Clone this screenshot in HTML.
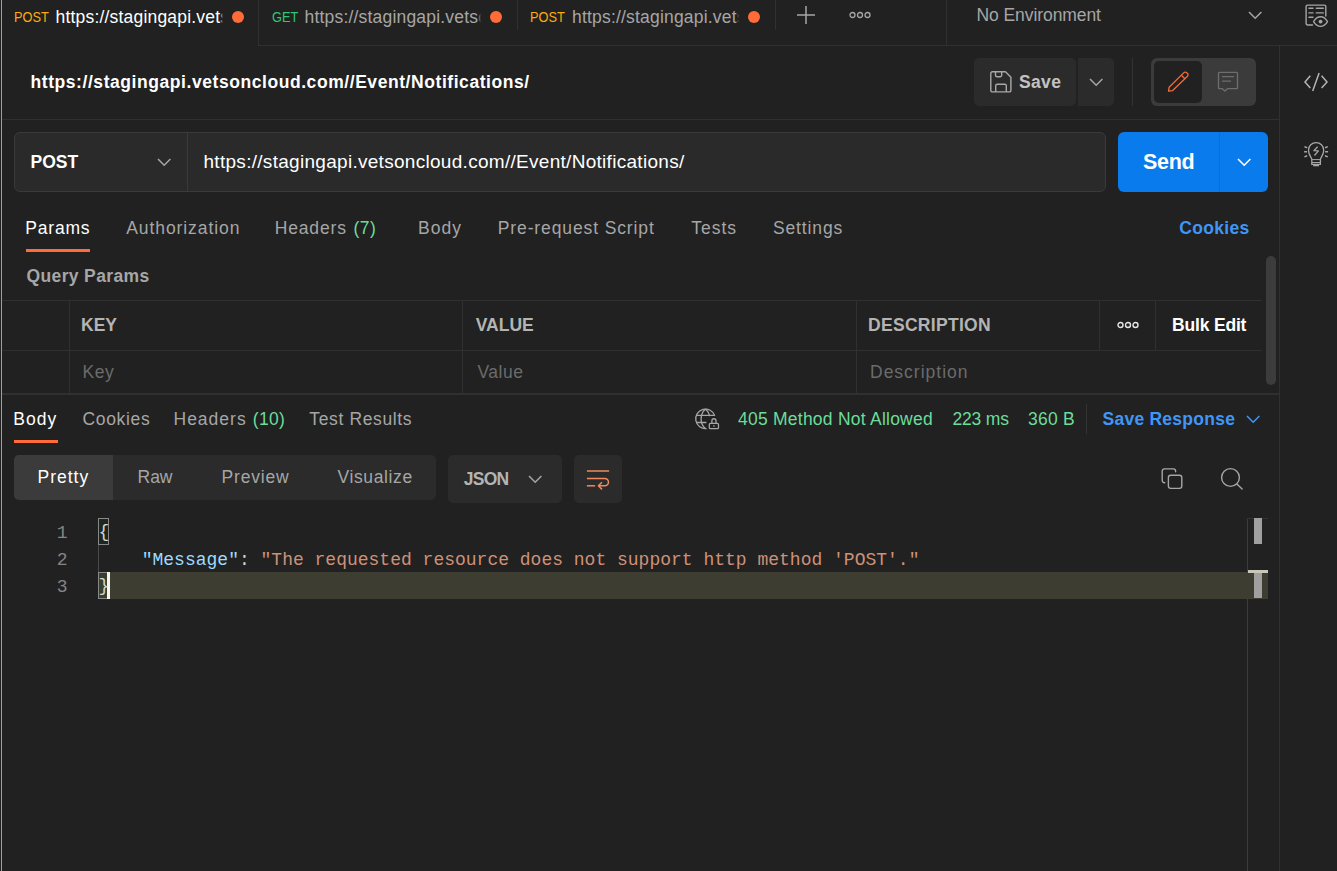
<!DOCTYPE html>
<html lang="en"><head><meta charset="utf-8"><title>Postman</title>
<style>
html,body{margin:0;padding:0;background:#212121;}
body{width:1337px;height:871px;overflow:hidden;font-family:"Liberation Sans",Arial,sans-serif;}
#app{position:relative;width:1337px;height:871px;background:#212121;overflow:hidden;}
#app div,#app span,#app svg{position:absolute;box-sizing:border-box;}
.t{white-space:pre;font-family:"Liberation Sans",Arial,sans-serif;font-weight:400;}
.t.b{font-weight:700;}
.hl{height:1px;background:#303030;}
.vl{width:1px;background:#303030;}
svg{overflow:visible;}
.tabtitle{overflow:hidden;}
.tt{left:0;top:8.5px;white-space:pre;font-size:17.5px;line-height:17.5px;letter-spacing:0.19px;}
.dot{width:12px;height:12px;border-radius:50%;background:#ff6c37;}
#code{left:0;top:0;width:1247px;height:871px;font-family:"Liberation Mono","DejaVu Sans Mono",monospace;font-size:18px;}
#code .ln{left:40px;width:27.500px;height:27px;line-height:27px;text-align:right;color:#858585;white-space:pre;}
#code .cl{left:98.500px;height:27px;line-height:27px;white-space:pre;color:#d4d4d4;}
#code .cl span{position:static;}
#code .k{color:#9cdcfe;}
#code .s{color:#ce9178;}
#code .p{color:#d4d4d4;}
.brk{border:1px solid #888;background:rgba(0,100,0,0.1);}
#code .cl span.br{position:relative;top:-1.500px;}
.fade{top:4px;width:3px;height:26px;background:linear-gradient(90deg,rgba(33,33,33,0),#212121);}
.mth{top:9px;font-size:15.500px;line-height:15.500px;white-space:pre;transform:scaleX(0.825);transform-origin:0 50%;}

</style></head>
<body>
<div id="app">
<!-- left window edge -->
<div id="edge" style="left:1px;top:0;width:1px;height:871px;background:#6ea8ee"></div>

<!-- ===== tab bar ===== -->
<div id="tabbar" style="left:0;top:0;width:1337px;height:46px">
  <div class="hl" style="left:259px;top:45px;width:1078px"></div>
  <div class="vl" style="left:258px;top:0;height:46px"></div>
  <div class="vl" style="left:517px;top:0;height:30px"></div>
  <div class="vl" style="left:775px;top:0;height:30px"></div>
  <div class="vl" style="left:946px;top:0;height:46px"></div>
  <span class="mth" style="left:14.400px;color:#fdaa0f">POST</span><span class="mth" style="left:272px;color:#2fc872">GET</span><span class="mth" style="left:530.400px;color:#fdaa0f">POST</span>
  <div class="tabtitle" style="left:55.5px;top:0;width:167.5px;height:40px;color:#fff"><span class="tt" id="tt1">https://stagingapi.vetsoncloud.com//Event/Notifications/</span></div>
  <div class="tabtitle" style="left:304.5px;top:0;width:176.5px;height:40px;color:#a6a6a6"><span class="tt" id="tt2">https://stagingapi.vetsoncloud.com//Event/Notifications/</span></div>
  <div class="tabtitle" style="left:572px;top:0;width:167px;height:40px;color:#a6a6a6"><span class="tt" id="tt3">https://stagingapi.vetsoncloud.com//Event/Notifications/</span></div>
  <div class="fade" style="left:220px"></div><div class="fade" style="left:478px"></div><div class="fade" style="left:736px"></div>
  <div class="dot" style="left:232px;top:11px"></div>
  <div class="dot" style="left:490px;top:11px"></div>
  <div class="dot" style="left:748px;top:11px"></div>
  <!-- plus -->
  <svg style="left:797px;top:6px" width="18" height="18" viewBox="0 0 18 18"><path d="M9 0v18M0 9h18" stroke="#a6a6a6" stroke-width="1.5" fill="none"/></svg>
  <!-- more -->
  <svg style="left:849px;top:11px" width="22" height="8" viewBox="0 0 22 8"><g fill="none" stroke="#a6a6a6" stroke-width="1.3"><circle cx="3.5" cy="4" r="2.5"/><circle cx="11" cy="4" r="2.5"/><circle cx="18.5" cy="4" r="2.5"/></g></svg>
  <!-- env chevron -->
<svg style="left:1248.13px;top:11.13px" width="14.400" height="9" viewBox="0 0 14.400 9"><path d="M1 1L7.200 7.200L13.400 1" stroke="#a6a6a6" stroke-width="1.5" fill="none"/></svg>
  <!-- env quick look -->
  <svg style="left:1305px;top:4px" width="24" height="24" viewBox="0 0 24 24"><g fill="none" stroke="#a6a6a6" stroke-width="1.4" stroke-linecap="round" stroke-linejoin="round"><path d="M7.5 21H2.6a1.5 1.5 0 0 1-1.5-1.5V2.6a1.5 1.5 0 0 1 1.5-1.5h16.7a1.5 1.5 0 0 1 1.5 1.5V12"/><path d="M4 4.300h4M11.300 4.300h7M4 8.900h4M11.300 8.900h7M4 13.200h4"/><path d="M8.6 17.6c1.900-3.200 4.200-4.800 6.950-4.800s5.050 1.600 6.950 4.800c-1.900 3.200-4.200 4.800-6.950 4.800s-5.050-1.600-6.950-4.800z"/><circle cx="15.550" cy="17.600" r="1.900" fill="#a6a6a6" stroke="none"/></g></svg>
</div>

<!-- ===== right sidebar ===== -->
<div class="vl" style="left:1279px;top:45px;height:826px"></div>
<svg style="left:1303px;top:72px" width="26" height="20" viewBox="0 0 26 20"><g fill="none" stroke="#b4b4b4" stroke-width="1.500" stroke-linejoin="miter"><path d="M7.300 3.800L2 10l5.300 5.900M18.600 3.800L24 10l-5.400 5.900M16.100 1L9.700 18.900"/></g></svg>
<svg style="left:1303px;top:141px" width="27" height="27" viewBox="0 0 27 27"><g fill="none" stroke="#a6a6a6" stroke-width="1.300" stroke-linecap="butt" stroke-linejoin="round"><path d="M8.800 23.400V18.300C8.800 16.500 5.500 14.500 5.500 9.200A7.600 7.600 0 0 1 20.700 9.200C20.700 14.500 17.400 16.500 17.400 18.300V23.400Z"/><path d="M8.800 18.600h8.600M8.800 21.500h8.600" stroke-width="1"/><path d="M10.200 24.400h5.800" stroke-width="1.800"/><path d="M14.600 5.700L10.900 9.700L15.400 9.900L11.500 14.500"/><path d="M4.200 6.700L1.400 5.600M4.100 10.800H1.100M4.200 14.800L1.400 15.900M22 6.700L24.800 5.600M22.100 10.800H25.100M22 14.800L24.800 15.900" stroke-width="1.500"/></g></svg>

<!-- ===== title row ===== -->
<div class="hl" style="left:2px;top:119px;width:1277px"></div>
<div id="savebtn" style="left:974px;top:58px;width:102px;height:48px;background:#2b2b2b;border-radius:5px"></div>
<div id="savedd" style="left:1078px;top:58px;width:36px;height:48px;background:#2b2b2b;border-radius:0 5px 5px 0"></div>
<svg style="left:990px;top:71px" width="22" height="22" viewBox="0 0 22 22"><g fill="none" stroke="#a8a8a8" stroke-width="1.400" stroke-linejoin="round"><path d="M2.300 0.800h13.200l5.400 5.400v13.200a1.500 1.500 0 0 1-1.500 1.500H2.300a1.500 1.500 0 0 1-1.500-1.500V2.300a1.500 1.500 0 0 1 1.500-1.500z"/><path d="M5.500 0.800v3.400a1.500 1.500 0 0 0 1.500 1.500h3.200a1.500 1.500 0 0 0 1.500-1.500V0.800"/><path d="M5.700 20.900v-6.200a1.500 1.500 0 0 1 1.500-1.500h7.600a1.500 1.500 0 0 1 1.500 1.500v6.200"/></g></svg>
<svg style="left:1088.73px;top:77.93px" width="14.400" height="9" viewBox="0 0 14.400 9"><path d="M1 1L7.200 7.200L13.400 1" stroke="#a6a6a6" stroke-width="1.5" fill="none"/></svg>
<div class="vl" style="left:1132px;top:58px;height:48px;background:#333"></div>
<div id="modegrp" style="left:1151px;top:58px;width:105px;height:48px;background:#3b3b3b;border-radius:6px"></div>
<div id="modeedit" style="left:1154px;top:61px;width:48px;height:42px;background:#212121;border-radius:5px"></div>
<svg style="left:1166px;top:70px" width="24" height="24" viewBox="0 0 24 24"><g fill="none" stroke="#f26b3a" stroke-width="1.300" stroke-linejoin="round"><path d="M2.500 21.200l0.600-3.900L17.900 2.600a1.900 1.900 0 0 1 2.700 0l0.900 0.900a1.900 1.900 0 0 1 0 2.700L6.400 20.700z"/><path d="M15.300 5.200l3.600 3.600"/></g></svg>
<svg style="left:1217px;top:71px" width="22" height="22" viewBox="0 0 22 22"><g fill="none" stroke="#6e6e6e" stroke-width="1.300" stroke-linejoin="round"><path d="M2.400 1.400h17.200a0.900 0.900 0 0 1 0.900 0.900v14.500a0.900 0.900 0 0 1-0.900 0.900H10.500l-2.600 2.400-2.600-2.400H2.400a0.900 0.900 0 0 1-0.900-0.900V2.300a0.900 0.900 0 0 1 0.900-0.900z"/><path d="M5 5.700h12M5 10.100h9"/></g></svg>

<!-- ===== url row ===== -->
<div id="urlbox" style="left:14px;top:132px;width:1092px;height:60px;background:#2a2a2a;border:1px solid #3a3a3a;border-radius:6px"></div>
<div class="vl" style="left:187px;top:133px;height:58px;background:#3a3a3a"></div>
<svg style="left:157.03px;top:158.23px" width="14.400" height="9" viewBox="0 0 14.400 9"><path d="M1 1L7.200 7.200L13.400 1" stroke="#a6a6a6" stroke-width="1.5" fill="none"/></svg>
<div id="sendbtn" style="left:1118px;top:132px;width:150px;height:60px;background:#097bed;border-radius:6px"></div>
<div class="vl" style="left:1219px;top:132px;height:60px;background:#0a6fd4"></div>
<svg style="left:1237.03px;top:158.23px" width="14.400" height="9" viewBox="0 0 14.400 9"><path d="M1 1L7.200 7.200L13.400 1" stroke="#ffffff" stroke-width="1.6" fill="none"/></svg>

<!-- ===== request tabs ===== -->
<div style="left:26px;top:249px;width:64px;height:3px;background:#ff6c37"></div>

<!-- scrollbar -->
<div style="left:1266px;top:256px;width:10px;height:129px;background:#3c3c3c;border-radius:5px"></div>

<!-- ===== params table ===== -->
<div class="hl" style="left:2px;top:300px;width:1260px"></div>
<div class="hl" style="left:2px;top:350px;width:1260px"></div>
<div class="vl" style="left:69px;top:300px;height:93px"></div>
<div class="vl" style="left:462px;top:300px;height:93px"></div>
<div class="vl" style="left:856px;top:300px;height:93px"></div>
<div class="vl" style="left:1099px;top:300px;height:50px"></div>
<div class="vl" style="left:1155px;top:300px;height:50px"></div>
<svg style="left:1117px;top:321px" width="22" height="8" viewBox="0 0 22 8"><g fill="none" stroke="#e6e6e6" stroke-width="1.400"><circle cx="3.500" cy="4" r="2.500"/><circle cx="11" cy="4" r="2.500"/><circle cx="18.500" cy="4" r="2.500"/></g></svg>

<!-- ===== pane divider ===== -->
<div style="left:2px;top:393px;width:1277px;height:2px;background:#303030"></div>

<!-- ===== response tabs ===== -->
<div style="left:14px;top:440px;width:44px;height:3px;background:#ff6c37"></div>
<svg style="left:694px;top:407px" width="27" height="24" viewBox="0 0 27 24"><g fill="none" stroke="#a6a6a6" stroke-width="1.300" stroke-linecap="butt" stroke-linejoin="round"><path d="M20.770 8.710A9.800 9.800 0 1 0 12.600 21.640"/><path d="M2.600 8.400H20.600M2.600 15.500H12.400"/><path d="M11.500 2.100C5.600 7.500 5.600 16.300 11.500 21.700M11.500 2.100C13.900 4.300 15.300 6.600 15.700 9.200"/><rect x="15.300" y="16.400" width="9.200" height="5.300" rx="1.200"/><path d="M17.900 16.400v-2.600a2.050 2.050 0 0 1 4.100 0v2.600"/><path d="M19.950 18.300v1.500"/></g></svg>
<div class="vl" style="left:1086px;top:404px;height:30px;background:#333"></div>
<svg style="left:1245.93px;top:414.73px" width="14.400" height="9" viewBox="0 0 14.400 9"><path d="M1 1L7.200 7.200L13.400 1" stroke="#4096f6" stroke-width="1.5" fill="none"/></svg>

<!-- ===== view controls ===== -->
<div id="seg" style="left:14px;top:455px;width:422px;height:45px;background:#2b2b2b;border-radius:5px"></div>
<div id="segsel" style="left:14px;top:455px;width:99px;height:45px;background:#3b3b3b;border-radius:5px 0 0 5px"></div>
<div id="jsondd" style="left:448px;top:455px;width:114px;height:48px;background:#2b2b2b;border-radius:5px"></div>
<svg style="left:527.93px;top:474.93px" width="14.400" height="9" viewBox="0 0 14.400 9"><path d="M1 1L7.200 7.200L13.400 1" stroke="#a6a6a6" stroke-width="1.5" fill="none"/></svg>
<div id="wrapbtn" style="left:574px;top:455px;width:48px;height:48px;background:#2b2b2b;border-radius:5px"></div>
<svg style="left:586px;top:469px" width="24" height="22" viewBox="0 0 24 22"><g fill="none" stroke="#f08a5d" stroke-width="1.500" stroke-linecap="butt" stroke-linejoin="round"><path d="M0.900 2h22.200"/><path d="M0.900 9.400h17.900a3.700 3.700 0 0 1 0 7.400h-6.600"/><path d="M0.900 16.800h8.200"/><path d="M16 13.200l-3.600 3.600 3.600 3.600"/></g></svg>
<!-- copy / search -->
<svg style="left:1161px;top:467px" width="23" height="23" viewBox="0 0 23 23"><g fill="none" stroke="#a6a6a6" stroke-width="1.400" stroke-linecap="round" stroke-linejoin="round"><rect x="7.400" y="8.300" width="13.400" height="13.100" rx="2.300"/><path d="M3.800 15.700H3.400a2.200 2.200 0 0 1-2.200-2.200V4.100a2.200 2.200 0 0 1 2.200-2.200h9a2.200 2.200 0 0 1 2.200 2.200v0.600"/></g></svg>
<svg style="left:1220px;top:467px" width="25" height="25" viewBox="0 0 25 25"><g fill="none" stroke="#a6a6a6" stroke-width="1.400" stroke-linecap="round"><circle cx="10.500" cy="10.500" r="8.900"/><path d="M16.900 16.900l5.200 5.100"/></g></svg>

<!-- ===== code editor ===== -->
<div id="curline" style="left:98px;top:572px;width:1170px;height:27px;background:#3d3d32"></div>
<div class="vl" style="left:1247px;top:518px;height:353px;background:#3c3c3c"></div>
<div class="hl" style="left:1247px;top:518px;width:21px;background:#333"></div>
<div style="left:1254px;top:518px;width:8px;height:26px;background:#a0a0a0"></div>
<div style="left:1254px;top:572px;width:8px;height:26px;background:#a0a0a0"></div>
<div style="left:1248px;top:570px;width:20px;height:3px;background:#c8c8b8"></div>
<div class="vl" style="left:98px;top:545px;height:27px;background:#4a4a4a"></div>
<div class="brk" style="left:98px;top:518px;width:11px;height:27px"></div>
<div class="brk" style="left:98px;top:572px;width:11px;height:27px"></div>
<div style="left:107px;top:572px;width:3px;height:27px;background:#f4f4f0"></div>
<div id="code">
<div class="ln" style="top:520px">1</div><div class="ln" style="top:547px">2</div><div class="ln" style="top:574px">3</div>
<div class="cl" style="top:520px"><span class="p br">{</span></div>
<div class="cl" style="top:547px"><span class="p">    </span><span class="k">"Message"</span><span class="p">: </span><span class="s">"The requested resource does not support http method 'POST'."</span></div>
<div class="cl" style="top:574px"><span class="p br">}</span></div>
</div>

<div id="texts">
<span class="t " id="env" style="left:976.50px;top:7.12px;font-size:17.5px;line-height:17.5px;letter-spacing:-0.077px;color:#a6a6a6">No Environment</span>
<span class="t b" id="title" style="left:30.50px;top:74.12px;font-size:17.5px;line-height:17.5px;letter-spacing:0.564px;color:#ffffff">https://stagingapi.vetsoncloud.com//Event/Notifications/</span>
<span class="t b" id="save" style="left:1019.00px;top:74.12px;font-size:17.5px;line-height:17.5px;letter-spacing:0.333px;color:#c2c2c2">Save</span>
<span class="t b" id="method" style="left:30.50px;top:154.12px;font-size:17.5px;line-height:17.5px;letter-spacing:0.000px;color:#ffffff">POST</span>
<span class="t " id="url" style="left:203.50px;top:152.25px;font-size:19px;line-height:19px;letter-spacing:0.291px;color:#ffffff">https://stagingapi.vetsoncloud.com//Event/Notifications/</span>
<span class="t b" id="send" style="left:1143.00px;top:151.72px;font-size:21.5px;line-height:21.5px;letter-spacing:-0.333px;color:#ffffff">Send</span>
<span class="t " id="rt1" style="left:25.25px;top:220.12px;font-size:17.5px;line-height:17.5px;letter-spacing:0.800px;color:#ffffff">Params</span>
<span class="t " id="rt2" style="left:126.25px;top:220.12px;font-size:17.5px;line-height:17.5px;letter-spacing:0.917px;color:#a6a6a6">Authorization</span>
<span class="t " id="rt3" style="left:274.75px;top:220.12px;font-size:17.5px;line-height:17.5px;letter-spacing:0.833px;color:#a6a6a6">Headers</span>
<span class="t " id="rt3b" style="left:353.50px;top:220.12px;font-size:17.5px;line-height:17.5px;letter-spacing:0.500px;color:#6bdd9a">(7)</span>
<span class="t " id="rt4" style="left:418.00px;top:220.12px;font-size:17.5px;line-height:17.5px;letter-spacing:1.000px;color:#a6a6a6">Body</span>
<span class="t " id="rt5" style="left:497.75px;top:220.12px;font-size:17.5px;line-height:17.5px;letter-spacing:0.882px;color:#a6a6a6">Pre-request Script</span>
<span class="t " id="rt6" style="left:691.25px;top:220.12px;font-size:17.5px;line-height:17.5px;letter-spacing:1.000px;color:#a6a6a6">Tests</span>
<span class="t " id="rt7" style="left:773.00px;top:220.12px;font-size:17.5px;line-height:17.5px;letter-spacing:0.857px;color:#a6a6a6">Settings</span>
<span class="t b" id="rt8" style="left:1179.30px;top:220.12px;font-size:17.5px;line-height:17.5px;letter-spacing:0.300px;color:#4096f6">Cookies</span>
<span class="t b" id="qp" style="left:26.50px;top:268.12px;font-size:17.5px;line-height:17.5px;letter-spacing:0.364px;color:#a6a6a6">Query Params</span>
<span class="t b" id="th1" style="left:81.00px;top:317.12px;font-size:17.5px;line-height:17.5px;letter-spacing:0.000px;color:#b4b4b4">KEY</span>
<span class="t b" id="th2" style="left:475.75px;top:317.12px;font-size:17.5px;line-height:17.5px;letter-spacing:0.000px;color:#b4b4b4">VALUE</span>
<span class="t b" id="th3" style="left:868.00px;top:317.12px;font-size:17.5px;line-height:17.5px;letter-spacing:0.300px;color:#b4b4b4">DESCRIPTION</span>
<span class="t b" id="th4" style="left:1172.00px;top:317.12px;font-size:17.5px;line-height:17.5px;letter-spacing:-0.175px;color:#ffffff">Bulk Edit</span>
<span class="t " id="td1" style="left:82.50px;top:364.12px;font-size:17.5px;line-height:17.5px;letter-spacing:0.500px;color:#6b6b6b">Key</span>
<span class="t " id="td2" style="left:477.50px;top:364.12px;font-size:17.5px;line-height:17.5px;letter-spacing:0.500px;color:#6b6b6b">Value</span>
<span class="t " id="td3" style="left:870.00px;top:364.12px;font-size:17.5px;line-height:17.5px;letter-spacing:1.000px;color:#6b6b6b">Description</span>
<span class="t " id="pt1" style="left:13.25px;top:411.12px;font-size:17.5px;line-height:17.5px;letter-spacing:1.000px;color:#ffffff">Body</span>
<span class="t " id="pt2" style="left:82.50px;top:411.12px;font-size:17.5px;line-height:17.5px;letter-spacing:0.667px;color:#a6a6a6">Cookies</span>
<span class="t " id="pt3" style="left:173.50px;top:411.12px;font-size:17.5px;line-height:17.5px;letter-spacing:1.000px;color:#a6a6a6">Headers</span>
<span class="t " id="pt3b" style="left:252.75px;top:411.12px;font-size:17.5px;line-height:17.5px;letter-spacing:0.333px;color:#6bdd9a">(10)</span>
<span class="t " id="pt4" style="left:309.25px;top:411.12px;font-size:17.5px;line-height:17.5px;letter-spacing:0.636px;color:#a6a6a6">Test Results</span>
<span class="t " id="st1" style="left:738.00px;top:411.12px;font-size:17.5px;line-height:17.5px;letter-spacing:0.238px;color:#6bdd9a">405 Method Not Allowed</span>
<span class="t " id="st2" style="left:952.50px;top:411.12px;font-size:17.5px;line-height:17.5px;letter-spacing:-0.200px;color:#6bdd9a">223 ms</span>
<span class="t " id="st3" style="left:1028.00px;top:411.12px;font-size:17.5px;line-height:17.5px;letter-spacing:0.250px;color:#6bdd9a">360 B</span>
<span class="t b" id="st4" style="left:1102.50px;top:411.12px;font-size:17.5px;line-height:17.5px;letter-spacing:0.250px;color:#4096f6">Save Response</span>
<span class="t " id="sg1" style="left:37.50px;top:469.12px;font-size:17.5px;line-height:17.5px;letter-spacing:1.000px;color:#ffffff">Pretty</span>
<span class="t " id="sg2" style="left:137.50px;top:469.12px;font-size:17.5px;line-height:17.5px;letter-spacing:0.000px;color:#a6a6a6">Raw</span>
<span class="t " id="sg3" style="left:221.50px;top:469.12px;font-size:17.5px;line-height:17.5px;letter-spacing:0.833px;color:#a6a6a6">Preview</span>
<span class="t " id="sg4" style="left:337.50px;top:469.12px;font-size:17.5px;line-height:17.5px;letter-spacing:0.625px;color:#a6a6a6">Visualize</span>
<span class="t b" id="json" style="left:463.80px;top:471.12px;font-size:17.5px;line-height:17.5px;letter-spacing:-0.733px;color:#b4b4b4">JSON</span>
</div>
</div>
</body></html>
